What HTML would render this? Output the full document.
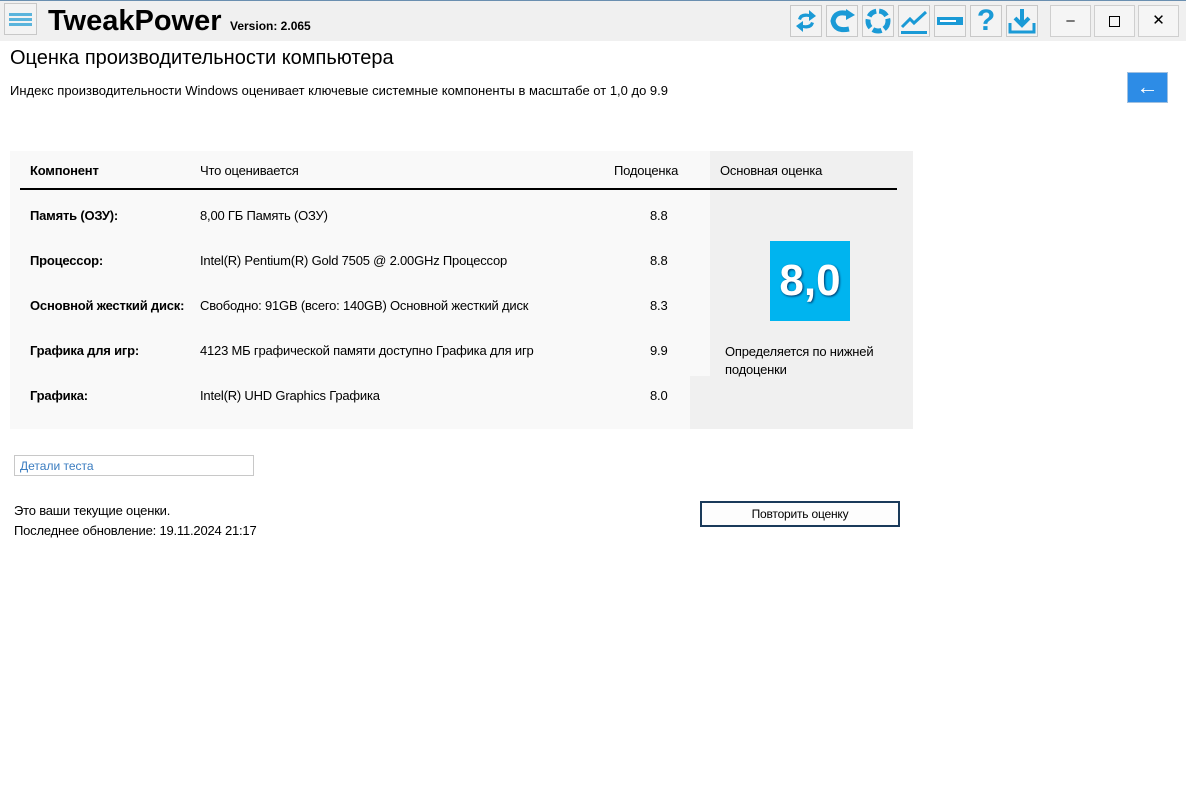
<!DOCTYPE html><html><head><meta charset="utf-8"><style>
body{margin:0;width:1186px;height:793px;background:#fff;font-family:"Liberation Sans",sans-serif;position:relative;overflow:hidden;color:#000}
.a{position:absolute;white-space:nowrap}
.tb{position:absolute;left:0;top:0;width:1186px;height:40px;background:#f0f0f0;border-top:1px solid #6a8fb0}
.ib{position:absolute;top:5px;width:30px;height:30px;border:1px solid #c8c8c8;background:#f3f3f3}
.wb{position:absolute;top:5px;width:39px;height:30px;border:1px solid #cfcfcf;background:#f5f5f5;font-size:15px;text-align:center;line-height:30px}
.t{font-size:13px;letter-spacing:-0.2px}
.b{font-weight:bold}
</style></head><body>
<div class="tb"></div>
<div class="a" style="left:4px;top:3px;width:31px;height:30px;border:1px solid #c8c8c8;background:#f3f3f3">
<div style="position:absolute;left:4px;top:9px;width:23px;height:3px;background:#5ab4dc"></div>
<div style="position:absolute;left:4px;top:14px;width:23px;height:3px;background:#5ab4dc"></div>
<div style="position:absolute;left:4px;top:19px;width:23px;height:3px;background:#5ab4dc"></div></div>
<div class="a b" style="left:48px;top:5px;font-size:29px">TweakPower</div>
<div class="a b" style="left:230px;top:19px;font-size:12px">Version: 2.065</div>
<div class="ib" style="left:790px"><svg width="30" height="30"><path d="M7 13 Q9 6 18 8 L18 4 L25 10 L18 15 L18 11 Q11 10 10 14Z M23 17 Q21 24 12 22 L12 26 L5 20 L12 15 L12 19 Q19 20 20 16Z" fill="#1a9ad6"/></svg></div>
<div class="ib" style="left:826px"><svg width="30" height="30"><path d="M22 8 Q8 4 6 15 Q8 26 22 23" stroke="#1a9ad6" stroke-width="5" fill="none"/><path d="M19 3 L28 9 L19 14Z" fill="#1a9ad6"/></svg></div>
<div class="ib" style="left:862px"><svg width="30" height="30"><circle cx="15" cy="15" r="10" stroke="#1a9ad6" stroke-width="5" fill="none" stroke-dasharray="9 3"/></svg></div>
<div class="ib" style="left:898px"><svg width="30" height="30"><path d="M3 21 L11 13 L15 17 L27 6" stroke="#1a9ad6" stroke-width="3" fill="none"/><rect x="2" y="25" width="26" height="3" fill="#1a9ad6"/></svg></div>
<div class="ib" style="left:934px"><svg width="30" height="30"><rect x="2" y="11" width="26" height="8" fill="#1a9ad6"/><rect x="5" y="14" width="16" height="2" fill="#fff"/></svg></div>
<div class="ib" style="left:970px"><div style="color:#1a9ad6;font:bold 30px 'Liberation Sans',sans-serif;text-align:center;line-height:30px">?</div></div>
<div class="ib" style="left:1006px"><svg width="30" height="30"><path d="M15 3 V18 M8 12 L15 19 L22 12" stroke="#1a9ad6" stroke-width="4" fill="none"/><path d="M3 17 V26 H27 V17" stroke="#1a9ad6" stroke-width="3" fill="none"/></svg></div>
<div class="wb" style="left:1050px">–</div>
<div class="wb" style="left:1094px"><div style="display:inline-block;width:9px;height:9px;border:1px solid #000;vertical-align:middle"></div></div>
<div class="wb" style="left:1138px">✕</div>
<div class="a" style="left:10px;top:47px;font-size:20px">Оценка производительности компьютера</div>
<div class="a t" style="left:10px;top:83px;letter-spacing:0">Индекс производительности Windows оценивает ключевые системные компоненты в масштабе от 1,0 до 9.9</div>
<div class="a" style="left:1127px;top:72px;width:39px;height:29px;background:#2d8ce6;border:1px solid #a0c0e0;color:#fff;font-size:22px;text-align:center;line-height:28px;font-weight:bold">←</div>
<div class="a" style="left:10px;top:151px;width:903px;height:278px;background:#f9f9f9"></div>
<div class="a" style="left:710px;top:151px;width:203px;height:278px;background:#f0f0f0"></div>
<div class="a" style="left:690px;top:376px;width:20px;height:53px;background:#f0f0f0"></div>
<div class="a" style="left:20px;top:188px;width:877px;height:2px;background:#000"></div>
<div class="a t b" style="left:30px;top:163px">Компонент</div>
<div class="a t" style="left:200px;top:163px">Что оценивается</div>
<div class="a t" style="left:614px;top:163px">Подоценка</div>
<div class="a t" style="left:720px;top:163px">Основная оценка</div>
<div class="a t b" style="left:30px;top:208px">Память (ОЗУ):</div><div class="a t" style="left:200px;top:208px">8,00 ГБ Память (ОЗУ)</div><div class="a t" style="left:650px;top:208px">8.8</div>
<div class="a t b" style="left:30px;top:253px">Процессор:</div><div class="a t" style="left:200px;top:253px">Intel(R) Pentium(R) Gold 7505 @ 2.00GHz Процессор</div><div class="a t" style="left:650px;top:253px">8.8</div>
<div class="a t b" style="left:30px;top:298px">Основной жесткий диск:</div><div class="a t" style="left:200px;top:298px">Свободно: 91GB (всего: 140GB) Основной жесткий диск</div><div class="a t" style="left:650px;top:298px">8.3</div>
<div class="a t b" style="left:30px;top:343px">Графика для игр:</div><div class="a t" style="left:200px;top:343px">4123 МБ графической памяти доступно Графика для игр</div><div class="a t" style="left:650px;top:343px">9.9</div>
<div class="a t b" style="left:30px;top:388px">Графика:</div><div class="a t" style="left:200px;top:388px">Intel(R) UHD Graphics Графика</div><div class="a t" style="left:650px;top:388px">8.0</div>
<div class="a" style="left:770px;top:241px;width:80px;height:80px;background:#00b4ef;color:#fff;font:bold 44px 'Liberation Sans',sans-serif;text-align:center;line-height:80px;text-shadow:1px 1px 2px #036">8,0</div>
<div class="a t" style="left:725px;top:343px;line-height:18px">Определяется по нижней<br>подоценки</div>
<div class="a" style="left:14px;top:455px;height:21px;border:1px solid #c8c8c8;background:#fff;color:#3a7cc0;font-size:12px;line-height:21px;padding-left:5px;box-sizing:border-box;width:240px">Детали теста</div>
<div class="a t" style="left:14px;top:503px">Это ваши текущие оценки.</div>
<div class="a t" style="left:14px;top:523px">Последнее обновление: 19.11.2024 21:17</div>
<div class="a t" style="left:700px;top:501px;width:196px;height:22px;border:2px solid #1a3a5a;background:#fdfdfd;text-align:center;line-height:22px;font-size:12px">Повторить оценку</div>
</body></html>
